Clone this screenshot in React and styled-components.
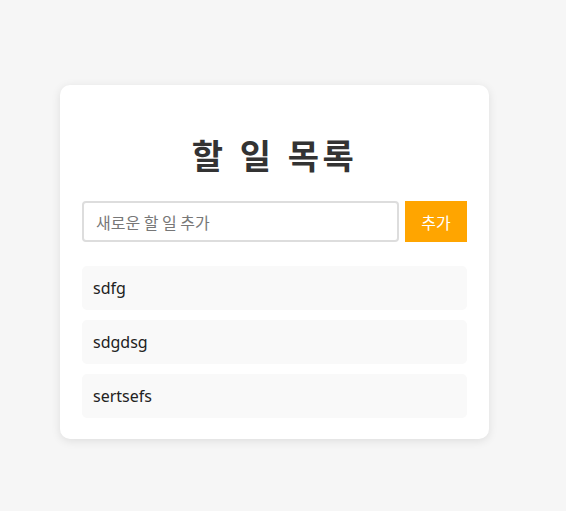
import styled, { createGlobalStyle } from "styled-components";

const GlobalStyle = createGlobalStyle`
  body {
    margin: 0;
    background: #f6f6f6;
    font-family: "Noto Sans", "Noto Sans CJK KR", sans-serif;
  }
`;

const Page = styled.div`
  min-height: 511px;
  padding: 85px 0 0 60px;
  box-sizing: border-box;
`;

const Card = styled.div`
  width: 429px;
  box-sizing: border-box;
  padding: 20px 22px 21px;
  background: #fff;
  border-radius: 10px;
  box-shadow: 0 2px 10px rgba(0, 0, 0, 0.1);
`;

const Title = styled.h1`
  margin: 30px 0 26px;
  font-family: "Noto Sans CJK KR", sans-serif;
  font-size: 34px;
  line-height: 40px;
  font-weight: 700;
  letter-spacing: 3.5px;
  word-spacing: 2px;
  text-align: center;
  color: #333;
`;

const Form = styled.form`
  display: flex;
  gap: 6px;
  margin-bottom: 24px;
`;

const Input = styled.input`
  flex: 1;
  height: 41px;
  box-sizing: border-box;
  padding: 0 12px;
  border: 2px solid #ddd;
  border-radius: 4px;
  font-family: "Noto Sans CJK KR", sans-serif;
  font-size: 16px;
  color: #333;
  outline: none;
  &::placeholder {
    color: #777;
  }
`;

const AddButton = styled.button`
  width: 62px;
  height: 41px;
  border: none;
  background: #ffa500;
  color: #fff;
  font-family: "Noto Sans CJK KR", sans-serif;
  font-size: 16px;
  cursor: pointer;
`;

const List = styled.ul`
  list-style: none;
  margin: 0;
  padding: 0;
  display: flex;
  flex-direction: column;
  gap: 10px;
`;

const Item = styled.li`
  height: 44px;
  display: flex;
  align-items: center;
  padding: 0 11px;
  background: #f9f9f9;
  border-radius: 5px;
  font-size: 16px;
  color: #222;
`;

const todos = ["sdfg", "sdgdsg", "sertsefs"];

export default function App() {
  return (
    <>
      <GlobalStyle />
      <Page>
        <Card>
          <Title>할 일 목록</Title>
          <Form onSubmit={(e) => e.preventDefault()}>
            <Input placeholder="새로운 할 일 추가" />
            <AddButton type="submit">추가</AddButton>
          </Form>
          <List>
            {todos.map((t) => (
              <Item key={t}>{t}</Item>
            ))}
          </List>
        </Card>
      </Page>
    </>
  );
}
